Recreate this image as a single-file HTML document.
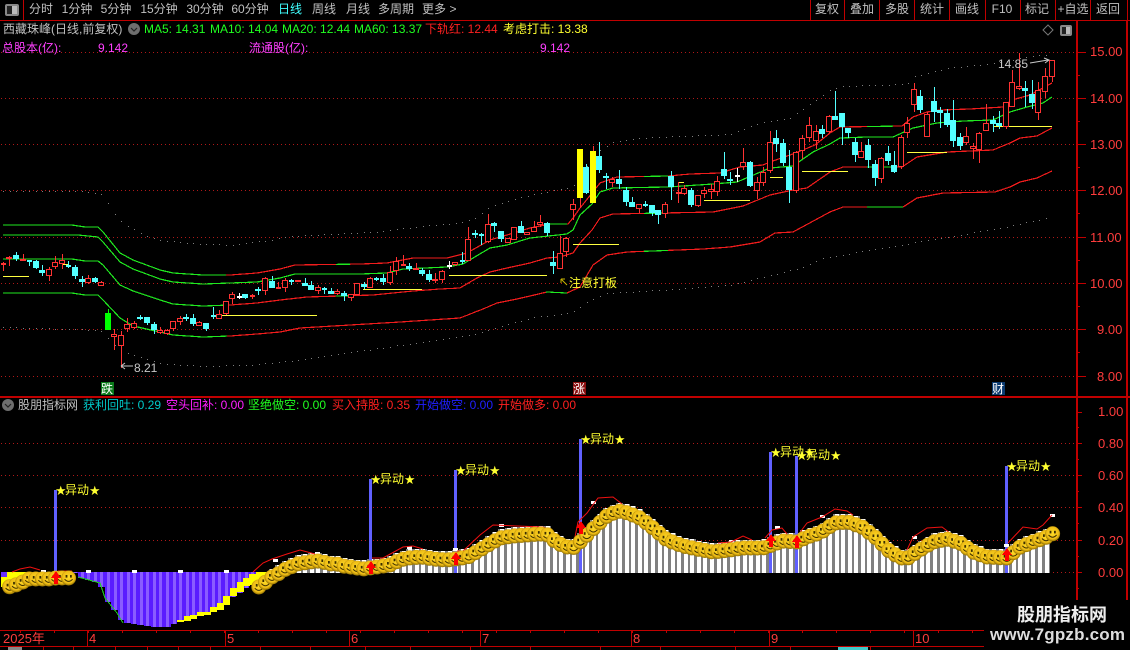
<!DOCTYPE html>
<html lang="zh"><head><meta charset="utf-8"><title>西藏珠峰</title>
<style>
html,body{margin:0;padding:0;background:#000;width:1130px;height:650px;overflow:hidden}
svg{display:block}
text{font-family:"Liberation Sans","WenQuanYi Zen Hei","Noto Sans CJK SC",sans-serif;font-size:12px;white-space:pre}
.t{fill:#c0c0c0;text-anchor:middle}
.ax{fill:#ff3c3c;font-size:13px}
.ym{fill:#ffff30}
.st{font-size:10.5px}
</style></head><body>
<svg id="s" xmlns="http://www.w3.org/2000/svg" width="1130" height="650" viewBox="0 0 1130 650">
<defs>
<radialGradient id="sm" cx="50%" cy="45%" r="55%"><stop offset="0" stop-color="#ffdc28"/><stop offset=".72" stop-color="#eebc16"/><stop offset="1" stop-color="#8c6c00"/></radialGradient>
<g id="smile"><circle r="7.5" fill="url(#sm)"/><rect x="-3" y="-3" width="1.8" height="2.6" fill="#3c2e00"/><rect x="1.4" y="-3" width="1.8" height="2.6" fill="#3c2e00"/><path d="M-4 1.2Q0 5.6 4 1.2" fill="none" stroke="#3c2e00" stroke-width="1"/></g>
</defs>
<g id="grid" shape-rendering="crispEdges"></g>
<g id="dots" shape-rendering="crispEdges"></g>
<g id="bands" shape-rendering="crispEdges"></g>
<g id="ylines" shape-rendering="crispEdges"></g>
<g id="candles" shape-rendering="crispEdges"></g>
<g id="low" shape-rendering="crispEdges"></g>
<g id="redc"></g>
<g id="smiles"></g>
<g id="arrows" shape-rendering="crispEdges"></g>
<g id="frame" shape-rendering="crispEdges"></g>

<!-- top toolbar -->
<rect x="5" y="4" width="14" height="12" rx="2" fill="#888"/><rect x="7" y="6" width="5" height="8" fill="#222"/><rect x="12" y="6" width="5" height="8" fill="#bbb"/>
<g class="tt">
<text class="t" x="41" y="13">分时</text>
<text class="t" x="77" y="13">1分钟</text>
<text class="t" x="116" y="13">5分钟</text>
<text class="t" x="159" y="13">15分钟</text>
<text class="t" x="205" y="13">30分钟</text>
<text class="t" x="250" y="13">60分钟</text>
<text class="t" x="290" y="13" style="fill:#40ffff">日线</text>
<text class="t" x="324" y="13">周线</text>
<text class="t" x="358" y="13">月线</text>
<text class="t" x="396" y="13">多周期</text>
<text class="t" x="434" y="13">更多</text>
<text class="t" x="453" y="13">&gt;</text>
<text class="t" x="827" y="13">复权</text>
<text class="t" x="862" y="13">叠加</text>
<text class="t" x="897" y="13">多股</text>
<text class="t" x="932" y="13">统计</text>
<text class="t" x="967" y="13">画线</text>
<text class="t" x="1002" y="13">F10</text>
<text class="t" x="1037" y="13">标记</text>
<text class="t" x="1073" y="13">+自选</text>
<text class="t" x="1108" y="13">返回</text>
</g>

<!-- info rows -->
<text x="3" y="33" fill="#c0c0c0">西藏珠峰(日线,前复权)</text>
<circle cx="134" cy="29" r="6" fill="#6e6e6e"/><path d="M131 28l3 3 3-3" fill="none" stroke="#222" stroke-width="1.2"/>
<text x="144" y="33" fill="#20ff20">MA5: 14.31</text>
<text x="210" y="33" fill="#20ff20">MA10: 14.04</text>
<text x="282" y="33" fill="#20ff20">MA20: 12.44</text>
<text x="354" y="33" fill="#20ff20">MA60: 13.37</text>
<text x="425" y="33" fill="#ff2020">下轨红: 12.44</text>
<text x="503" y="33" fill="#ffff30">考虑打击: 13.38</text>
<text x="2" y="52" fill="#ff40ff">总股本(亿):</text>
<text x="98" y="52" fill="#ff40ff">9.142</text>
<text x="249" y="52" fill="#ff40ff">流通股(亿):</text>
<text x="540" y="52" fill="#ff40ff">9.142</text>
<path d="M1048 25l5 5-5 5-5-5z" fill="none" stroke="#777"/>
<rect x="1060" y="25" width="12" height="11" rx="2" fill="#888"/><rect x="1062" y="27" width="4" height="7" fill="#222"/><rect x="1066" y="27" width="4" height="7" fill="#bbb"/>

<!-- chart annotations -->
<text x="998" y="68" fill="#c8c8c8">14.85</text>
<path d="M1030 63l18-3M1044 58l5 2-4 3" fill="none" stroke="#c8c8c8"/>
<text x="134" y="372" fill="#c8c8c8">8.21</text>
<path d="M121 366h12M121 366l4-3M121 366l4 3" fill="none" stroke="#c8c8c8"/>
<path d="M561 279l6 6M561 279h4M561 279v4" fill="none" stroke="#c8b400"/>
<text x="569" y="287" class="ym">注意打板</text>
<rect x="101" y="382" width="13" height="13" fill="#0a7a1a"/><text x="101" y="393" fill="#fff">跌</text>
<rect x="573" y="382" width="13" height="13" fill="#8a1010"/><text x="573" y="393" fill="#fff">涨</text>
<rect x="992" y="382" width="13" height="13" fill="#0a3a70"/><text x="992" y="393" fill="#fff">财</text>

<!-- indicator header -->
<circle cx="8" cy="405" r="6" fill="#6e6e6e"/><path d="M5 404l3 3 3-3" fill="none" stroke="#222" stroke-width="1.2"/>
<text x="18" y="409" fill="#c0c0c0">股朋指标网</text>
<text x="83" y="409" fill="#00c8c8">获利回吐: 0.29</text>
<text x="166" y="409" fill="#ff20ff">空头回补: 0.00</text>
<text x="248" y="409" fill="#20ff20">坚绝做空: 0.00</text>
<text x="332" y="409" fill="#ff2020">买入持股: 0.35</text>
<text x="415" y="409" fill="#2020ff">开始做空: 0.00</text>
<text x="498" y="409" fill="#ff2020">开始做多: 0.00</text>

<!-- signal labels -->
<text y="494" class="ym"><tspan class="st" x="55.5">★</tspan><tspan x="65">异动</tspan><tspan class="st" x="89.5">★</tspan></text>
<text y="483" class="ym"><tspan class="st" x="370.5">★</tspan><tspan x="380">异动</tspan><tspan class="st" x="404.5">★</tspan></text>
<text y="474" class="ym"><tspan class="st" x="455.5">★</tspan><tspan x="465">异动</tspan><tspan class="st" x="489.5">★</tspan></text>
<text y="443" class="ym"><tspan class="st" x="580.5">★</tspan><tspan x="590">异动</tspan><tspan class="st" x="614.5">★</tspan></text>
<text y="456" class="ym"><tspan class="st" x="770.5">★</tspan><tspan x="780">异动</tspan><tspan class="st" x="804.5">★</tspan></text>
<text y="459" class="ym"><tspan class="st" x="796.5">★</tspan><tspan x="806">异动</tspan><tspan class="st" x="830.5">★</tspan></text>
<text y="470" class="ym"><tspan class="st" x="1006.5">★</tspan><tspan x="1016">异动</tspan><tspan class="st" x="1040.5">★</tspan></text>

<!-- price axis -->
<text class="ax" x="1090" y="56">15.00</text>
<text class="ax" x="1090" y="103">14.00</text>
<text class="ax" x="1090" y="149">13.00</text>
<text class="ax" x="1090" y="195">12.00</text>
<text class="ax" x="1090" y="242">11.00</text>
<text class="ax" x="1090" y="288">10.00</text>
<text class="ax" x="1097" y="334">9.00</text>
<text class="ax" x="1097" y="381">8.00</text>
<text class="ax" x="1098" y="416">1.00</text>
<text class="ax" x="1098" y="448">0.80</text>
<text class="ax" x="1098" y="480">0.60</text>
<text class="ax" x="1098" y="512">0.40</text>
<text class="ax" x="1098" y="545">0.20</text>
<text class="ax" x="1098" y="577">0.00</text>

<!-- time axis -->
<text class="ax" x="3" y="643">2025年</text>
<text class="ax" x="89" y="643">4</text>
<text class="ax" x="227" y="643">5</text>
<text class="ax" x="351" y="643">6</text>
<text class="ax" x="482" y="643">7</text>
<text class="ax" x="633" y="643">8</text>
<text class="ax" x="771" y="643">9</text>
<text class="ax" x="915" y="643">10</text>

<!-- watermark -->
<rect x="984" y="600" width="146" height="50" fill="#000"/>
<text x="1017" y="621" fill="#eee" style="font-size:18px;font-weight:bold;font-family:'Liberation Sans','Noto Sans CJK SC',sans-serif">股朋指标网</text>
<text x="990" y="640" fill="#ddd" textLength="135" lengthAdjust="spacing" style="font-size:17px;font-weight:bold">www.7gpzb.com</text>
</svg>
<script>
var NS='http://www.w3.org/2000/svg';
function el(p,n,a){var e=document.createElementNS(NS,n);for(var k in a)e.setAttribute(k,a[k]);document.getElementById(p).appendChild(e);return e}
function R(p,x,y,w,h,f){return el(p,'rect',{x:x,y:y,width:w,height:h,fill:f})}
function itp(P,x){if(x<=P[0][0])return P[0][1];for(var i=1;i<P.length;i++){if(x<=P[i][0]){var a=P[i-1],b=P[i];return a[1]+(b[1]-a[1])*(x-a[0])/(b[0]-a[0])}}return P[P.length-1][1]}
function X(i){return 3+6.56*i}

/* dotted grid */
var gr='#b01818',ys=[52,98,144,190,237,283,329,376,443,475,507,540,572];
ys.forEach(function(y){for(var x=1;x<1076;x+=4)R('grid',x,y,1,1,gr)});

/* bands */
var T1=[[3,225],[72,225],[85,227],[98,227],[103,232],[120,253],[133,260],[160,270],[173,273],[203,275],[230,275],[257,273],[280,269],[295,265],[360,264],[387,263],[413,258],[447,258],[467,253],[490,240],[507,235],[530,228],[550,224],[568,224],[573,218],[580,208],[592,193],[600,183],[617,177],[668,176],[690,174],[720,173],[740,167],[763,165],[770,162],[793,154],[815,145],[830,133],[840,127],[902,126],[913,117],[927,112],[940,110],[970,109],[1003,107],[1012,100],[1030,95],[1052,83]];
var T2=[[3,235],[78,235],[98,237],[103,242],[120,262],[133,269],[160,279],[173,282],[203,284],[230,283],[257,282],[280,278],[295,274],[360,274],[387,273],[403,269],[447,267],[463,264],[490,248],[507,245],[530,238],[567,234],[573,230],[580,215],[592,204],[600,192],[613,188],[668,187],[713,184],[737,182],[770,168],[793,166],[813,152],[830,144],[840,138],[867,137],[893,137],[913,128],[937,123],[963,121],[993,120],[1010,112],[1027,107],[1043,103],[1052,97]];
var T3=[[3,259],[72,259],[85,261],[98,261],[103,265],[120,285],[133,291],[160,300],[173,304],[203,306],[230,305],[257,303],[280,300],[307,297],[373,295],[413,291],[440,289],[460,288],[477,278],[490,272],[507,268],[530,263],[547,258],[560,257],[573,253],[580,243],[592,230],[600,218],[613,214],[663,213],[713,212],[743,206],[770,195],[793,190],[807,188],[830,172],[843,167],[902,167],[917,157],[947,152],[993,150],[1010,143],[1020,138],[1037,136],[1052,128]];
var T4=[[3,293],[72,293],[85,295],[98,295],[103,300],[120,318],[133,326],[160,332],[173,335],[203,337],[230,336],[257,334],[280,332],[300,328],[400,322],[460,318],[483,309],[497,303],[517,299],[530,296],[547,292],[567,293],[580,287],[593,265],[607,255],[627,252],[703,249],[730,247],[760,242],[775,233],[793,232],[830,212],[843,207],[903,207],[917,198],[943,193],[995,192],[1010,187],[1020,182],[1037,178],[1052,171]];
function band(P,gs){
 var cur=null,pts=[];
 function flush(){if(pts.length>1)el('bands','polyline',{points:pts.join(' '),fill:'none',stroke:cur,'stroke-width':1.2});pts=[]}
 for(var x=3;x<=1052;x++){
  var g=gs.some(function(r){return x>=r[0]&&x<=r[1]}),c=g?'#20e820':'#f01c1c';
  if(c!==cur){var last=pts[pts.length-1];flush();cur=c;if(last)pts.push(last)}
  pts.push(x+','+itp(P,x).toFixed(1));
 }
 flush();
}
band(T1,[[3,226],[337,350],[545,567],[645,668],[868,893]]);
band(T2,[[3,1052]]);
band(T3,[[3,228],[337,350],[645,668],[868,893]]);
band(T4,[[3,227],[547,567],[645,668],[868,903]]);

/* dotted outer bands */
var D1=[[3,191],[80,191],[88,192],[95,193],[101,194],[108,203],[114,213],[121,221],[127,225],[134,229],[140,233],[147,236],[154,238],[160,240],[190,243],[230,245],[270,240],[290,236],[373,232],[423,226],[457,223],[473,219],[490,207],[517,198],[540,193],[573,187],[580,175],[592,160],[600,150],[613,142],[637,138],[730,134],[763,122],[790,118],[830,90],[842,86],[907,84],[915,76],[947,68],[997,63],[1020,58],[1050,54]];
var D2=[[3,327],[100,330],[120,350],[133,355],[160,363],[200,366],[247,365],[300,360],[400,345],[470,335],[530,318],[573,312],[590,300],[607,293],[660,290],[730,285],[763,277],[803,267],[823,258],[900,245],[1000,228],[1047,218],[1053,213]];
for(var i=0;i<=159;i++){var x=Math.round(X(i));R('dots',x,Math.round(itp(D1,x)),1,1,'#808080');R('dots',x,Math.round(itp(D2,x)),1,1,'#808080')}

/* yellow lines */
[[3,29,276],[62,68,264],[219,317,315],[363,422,289],[449,547,275],[573,619,244],[678,684,182],[704,750,200],[770,783,177],[802,848,171],[907,947,152],[993,1052,126]].forEach(function(l){R('ylines',l[0],l[2],l[1]-l[0],1,'#ffff40')});
R('ylines',678,182,1,4,'#ffff40');

/* candles */
var C={r:'#ff3232',c:'#54ffff',w:'#ffffff',g:'#00ff00',y:'#ffff00'};
function cs(ox,oy,L){L.forEach(function(q){
 var x=Math.round(ox+q[0]/3),h=oy+q[1]/3,t=oy+q[2]/3,b=oy+q[3]/3,l=oy+q[4]/3,k=q[5];
 t=Math.round(t);b=Math.round(b);h=Math.round(h);l=Math.round(l);
 if(k=='y'||k=='g'){R('candles',x,h,1,l-h,k=='y'?'#ff3232':C.g);R('candles',x-3,t,6,b-t,C[k]);return}
 R('candles',x,h,1,l-h,C[k]);
 if(b-t<2){R('candles',x-2,t,5,2,C[k]);return}
 if(k=='r')el('candles','rect',{x:x-2.5,y:t+.5,width:5,height:b-t-1,fill:'#000',stroke:C.r,'stroke-width':1});
 else R('candles',x-3,t,6,b-t,C[k]);
})}
cs(0,200,[[9,185,188,190,213,'r'],[27,168,170,177,197,'r'],[48,156,166,178,182,'c'],[68,162,178,182,183,'r'],[88,180,180,183,198,'c'],[108,180,184,204,206,'c'],[127,195,210,219,228,'c'],[148,200,208,227,243,'r'],[166,168,187,200,208,'r'],[186,162,181,191,206,'r'],[205,183,194,197,204,'c'],[226,195,202,228,238,'c'],[245,228,238,245,261,'c'],[265,226,234,250,252,'r'],[285,232,235,245,248,'c'],[304,243,247,257,258,'r'],[325,327,340,390,390,'g'],[343,388,403,410,450,'r'],[364,392,406,437,505,'r'],[382,355,373,388,395,'r'],[403,362,368,384,386,'r'],[421,345,352,356,360,'c'],[442,352,352,368,374,'c'],[463,365,372,389,403,'c'],[481,382,391,400,402,'r'],[502,388,390,402,404,'r'],[520,363,364,386,392,'r'],[541,347,354,365,376,'r'],[559,342,352,356,364,'c'],[580,342,354,372,377,'c'],[598,362,367,377,378,'r'],[619,370,370,386,392,'c'],[640,320,345,347,357,'c'],[658,330,343,356,358,'r'],[679,303,304,342,344,'r'],[697,277,283,296,312,'r'],[717,280,287,289,297,'w'],[736,282,283,293,297,'c'],[756,282,285,288,297,'r'],[775,262,267,272,285,'c'],[796,230,233,272,285,'r'],[817,228,243,263,265,'c'],[835,245,260,262,265,'r'],[856,235,241,263,276,'r'],[874,237,239,241,255,'c'],[893,240,241,245,246,'r']]);
cs(290,190,[[44,264,279,288,288,'c'],[64,273,285,300,300,'c'],[83,285,292,303,312,'r'],[103,292,294,298,312,'c'],[124,295,303,311,312,'c'],[142,298,304,312,316,'r'],[163,304,309,319,332,'c'],[182,312,313,323,332,'r'],[202,280,280,315,315,'r'],[221,276,281,291,298,'c'],[241,262,265,293,295,'r'],[259,262,264,266,273,'c'],[280,252,264,276,285,'c'],[301,228,245,278,285,'r'],[319,202,214,242,255,'r'],[339,195,222,224,226,'r'],[358,218,228,236,242,'c'],[379,219,233,240,240,'r'],[397,234,240,252,258,'c'],[418,240,252,271,276,'c'],[436,250,267,273,278,'r'],[457,240,243,270,280,'r'],[477,213,224,226,237,'w'],[496,215,217,226,228,'r'],[517,186,210,214,222,'c'],[535,112,148,212,212,'r'],[556,120,128,134,145,'c'],[574,128,132,136,165,'c'],[595,72,103,155,158,'r'],[613,97,99,107,126,'c'],[634,123,123,147,155,'c'],[654,143,145,158,160,'r'],[673,112,112,150,150,'r'],[693,93,108,128,130,'c'],[712,125,127,134,136,'r']]);
cs(530,130,[[13,273,291,305,307,'r'],[31,255,276,286,290,'r'],[52,275,280,310,318,'c'],[70,363,396,408,432,'c'],[91,318,370,416,416,'r'],[109,320,324,366,380,'r'],[130,208,222,240,270,'r'],[151,57,57,204,235,'y'],[169,102,110,190,193,'c'],[190,48,63,219,219,'y'],[208,37,78,120,128,'c'],[229,130,138,143,178,'c'],[247,140,148,158,172,'r'],[268,120,147,162,178,'c'],[287,172,180,216,228,'c'],[307,201,216,232,232,'c'],[328,222,223,236,250,'r'],[346,213,221,224,232,'c'],[367,225,225,250,258,'c'],[385,240,241,255,282,'c'],[406,217,223,252,264,'r'],[424,123,137,172,210,'c'],[445,155,186,190,218,'r'],[463,165,175,192,195,'r'],[484,175,180,225,230,'c'],[505,195,195,228,232,'r'],[523,172,181,191,205,'r'],[544,162,178,185,207,'r'],[562,138,154,186,198,'r'],[583,66,117,138,148,'c'],[601,125,147,153,165,'c'],[621,114,135,137,155,'w'],[640,54,97,110,120,'r'],[661,92,96,168,170,'c'],[682,142,156,182,207,'r'],[700,110,126,160,168,'r'],[721,3,37,122,130,'r'],[739,0,25,42,66,'c'],[760,28,40,98,108,'c'],[778,60,110,180,218,'c'],[799,62,65,182,190,'r'],[817,15,25,62,88,'r'],[838,-40,-15,25,35,'r'],[859,-15,3,32,58,'r'],[877,-15,-3,12,25,'c']]);
cs(830,50,[[-3,195,198,245,250,'r'],[16,122,198,210,210,'c'],[37,190,190,232,285,'c'],[55,235,235,248,265,'c'],[76,265,276,315,335,'c'],[94,277,304,323,323,'r'],[115,268,285,330,353,'c'],[136,330,342,384,408,'c'],[154,320,325,386,398,'r'],[175,288,310,332,345,'c'],[193,304,345,365,368,'c'],[214,255,262,352,358,'r'],[232,202,220,250,265,'r'],[253,100,118,164,185,'r'],[271,120,138,180,188,'c'],[292,185,193,262,262,'r'],[313,110,153,187,215,'c'],[331,172,180,190,235,'c'],[352,178,190,225,230,'c'],[370,150,211,272,290,'c'],[391,250,261,288,300,'c'],[409,232,259,278,285,'r'],[430,280,288,296,326,'r'],[448,245,249,300,338,'r'],[469,163,220,242,242,'r'],[490,198,211,222,245,'c'],[508,183,218,228,238,'c'],[529,155,157,232,236,'r'],[547,60,97,170,170,'r'],[568,10,108,117,120,'r'],[586,92,115,122,170,'c'],[607,90,132,158,178,'c'],[625,97,121,190,210,'r'],[646,55,78,125,145,'r'],[667,30,30,80,95,'r']]);

/* lower panel */
var S1=[[9,587],[16,585],[23,582],[29,579],[36,579],[43,579],[49,579],[56,578],[62,578],[69,578]];
var S2=[[259,587],[266,582],[272,577],[278,574],[284,570],[291,567],[297,564],[310,562],[317,561],[323,562],[330,564],[337,564],[343,566],[350,567],[363,569],[370,568],[377,567],[390,565],[400,560],[408,558],[422,557],[433,559],[447,560],[455,559],[468,557],[480,550],[493,542],[500,538],[513,536],[540,534],[548,535],[557,543],[567,547],[573,548],[580,542],[593,529],[607,516],[618,511],[628,513],[640,518],[653,528],[667,540],[683,546],[697,549],[713,552],[730,550],[743,548],[763,548],[772,545],[782,541],[797,542],[807,537],[820,533],[835,523],[848,522],[862,527],[875,537],[888,550],[900,558],[908,558],[920,550],[933,542],[947,539],[960,543],[973,552],[987,557],[1007,558],[1020,547],[1033,542],[1047,537],[1054,533]];
var PB=[[76,573],[78,577],[100,583],[105,598],[117,613],[123,623],[143,625],[157,627],[170,627],[177,621],[213,610],[233,597],[247,587],[257,573]];
/* purple */
R('low',1,572,6,5,'#6a30ff');
for(i=11;i<=39;i++){x=X(i);var b=Math.round(itp(PB,x));if(b>572){R('low',Math.round(x-3.3),572,7,b-572,'#5a1cff');R('low',Math.round(x-1),572,3,b-572,'#8a5cff')}}
/* yellow stair */
el('low','polygon',{points:'7,572 36,572 16,585 1,587 1,577 7,577',fill:'#ffff00'});
[[531,720,725],[551,708,722],[571,705,716],[591,697,710],[611,695,705],[630,682,698],[650,670,690],[670,648,676],[690,625,650],[710,605,635],[730,595,620],[748,583,615],[768,577,605],[788,575,590]].forEach(function(q){R('low',Math.round(q[0]/3),Math.round(380+q[1]/3),7,Math.round((q[2]-q[1])/3),'#ffff00')});
el('low','polyline',{points:'78,577 100,583 105,598 117,613 123,623',fill:'none',stroke:'#20d020'});
/* stripes */
for(i=39;i<=159;i++){x=X(i);var t=Math.round(itp(S2,x)-8.5);if(t<572){R('low',Math.round(x-3.3),t,7,572-t+1,'#808080');R('low',Math.round(x-1.5),t,4,572-t+1,'#ffffff')}}
/* blue signal bars */
[[54,490],[369,479],[454,470],[579,439],[769,452],[795,456],[1005,466]].forEach(function(q){R('low',q[0],q[1],3,573-q[1],'#6060ff')});
/* small white marks */
[[43,571],[88,571],[134,571],[180,571],[226,571],[275,560],[317,553],[409,547],[455,549],[501,525],[593,502],[731,541],[777,527],[822,516],[914,537],[1006,545],[1052,515]].forEach(function(q){R('low',q[0]-2,q[1]-1,5,3,'#ffffff')});
/* thin red curves */
['12,572 20,569 30,567 40,570','58,571 72,571','253,572 263,563 272,559 287,554 300,550 315,554','372,558 383,558 403,547 413,546 423,549','457,551 463,551 480,535 493,525 517,526 543,527 550,530','575,537 578,522 587,513 598,498 613,497 622,504','718,543 731,542 743,536 752,540','765,538 772,530 782,528 787,534','798,535 807,523 822,517 835,509 847,511 853,515','907,550 913,537 927,528 942,527 950,533','1008,543 1023,527 1037,529 1043,525 1052,515'].forEach(function(p){el('redc','polyline',{points:p,fill:'none',stroke:'#f01010','stroke-width':1})});
/* smileys */
for(i=1;i<=10;i++){x=X(i);el('smiles','use',{href:'#smile',transform:'translate('+x.toFixed(1)+' '+itp(S1,x).toFixed(1)+')'})}
for(i=39;i<=160;i++){x=X(i);el('smiles','use',{href:'#smile',transform:'translate('+x.toFixed(1)+' '+itp(S2,x).toFixed(1)+')'})}
/* red arrows */
[[56,571],[371,561],[456,552],[581,521],[771,534],[797,535],[1007,548]].forEach(function(q){var x=q[0],y=q[1];el('arrows','path',{d:'M'+x+' '+y+'l5 7h-3v6h-4v-6h-3z',fill:'#ff0000'})});

/* frame */
var rc='#c00000';
R('frame',0,20,1130,1,rc);R('frame',23,0,1,20,rc);
[810,844,879,914,949,985,1020,1055,1090,1127].forEach(function(x){R('frame',x,0,1,20,rc)});
R('frame',0,396,1130,2,rc);
R('frame',1076,20,2,580,rc);R('frame',1126,20,2,580,rc);
[52,98,144,190,237,283,329,376].forEach(function(y){R('frame',1076,y,10,1,rc)});
[75,121,167,213,260,306,352].forEach(function(y){R('frame',1076,y,4,1,rc)});
[412,443,475,507,540,572].forEach(function(y){R('frame',1076,y,6,1,rc)});
[427,459,491,523,556,588].forEach(function(y){R('frame',1076,y,3,1,rc)});
R('frame',0,630,984,1,rc);R('frame',0,646,984,1,rc);
[87,225,349,480,631,769,913].forEach(function(x){R('frame',x,630,1,16,rc)});
for(x=20;x<984;x+=34)R('frame',x,630,1,3,rc);
[43,73,115,147,178,210,260,310,365,410,470,530,600,660,735,790,870].forEach(function(x){R('frame',x,647,1,3,rc)});
R('frame',8,647,14,3,'#888');R('frame',838,647,30,3,'#40c8c8');
</script>
</body></html>
